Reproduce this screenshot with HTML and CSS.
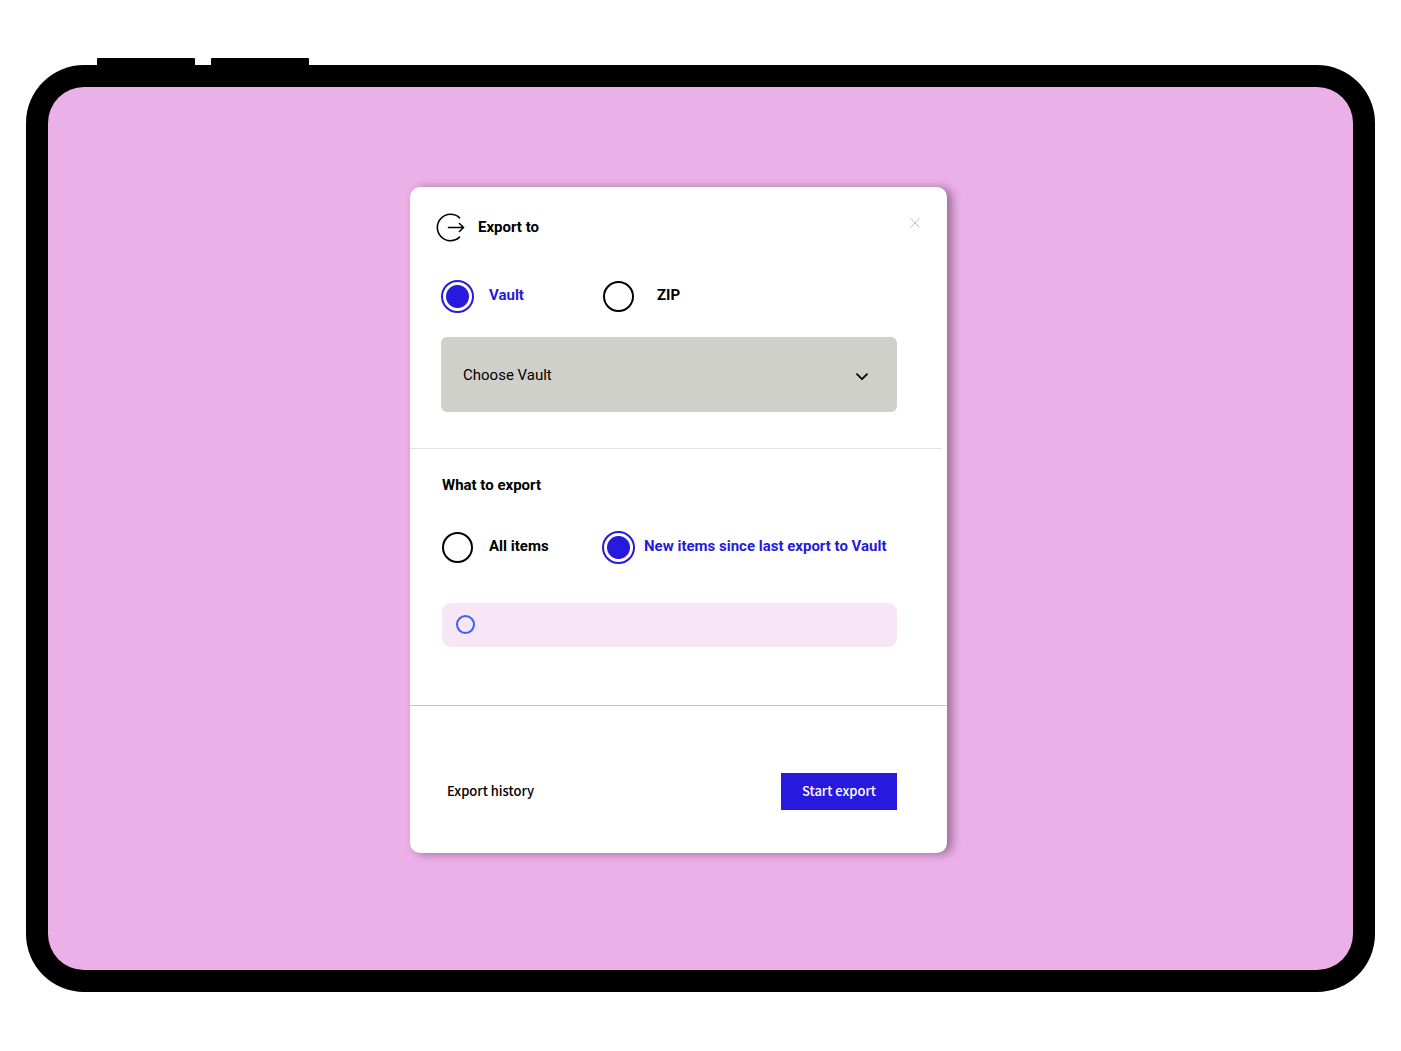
FILE: index.html
```html
<!DOCTYPE html>
<html lang="en">
<head>
<meta charset="utf-8">
<meta name="viewport" content="width=device-width, initial-scale=1">
<title>Export to</title>
<link rel="stylesheet" href="styles.css">
</head>
<body>
<div class="tablet">
  <span class="tablet-key tablet-key-up"></span>
  <span class="tablet-key tablet-key-down"></span>
  <main class="screen">
    <form class="dialog">
      <section class="panel">
        <header class="dialog-header">
          <svg class="export-icon" viewBox="0 0 29 29" aria-hidden="true">
            <path d="M23.5 4.800A13.200 13.200 0 1 0 23.500 24.200"/>
            <path d="M12.500 14.500H27.300M23.400 10.500L27.600 14.500L23.400 18.500"/>
          </svg>
          <h1 class="title">Export to</h1>
          <button class="close" type="button" aria-label="Close">
            <svg viewBox="0 0 12 12" aria-hidden="true"><path d="M1.500 1.500L10.500 10.500M10.500 1.500L1.500 10.500"/></svg>
          </button>
        </header>
        <div class="options">
          <label class="option"><input type="radio" name="target" checked><span>Vault</span></label>
          <label class="option option-wide"><input type="radio" name="target"><span>ZIP</span></label>
        </div>
        <div class="select-box">
          <select class="select" aria-label="Choose Vault"><option>Choose Vault</option></select>
          <svg class="chevron" viewBox="0 0 12 8" aria-hidden="true"><path d="M1 1.200L6 6.200L11 1.200"/></svg>
        </div>
      </section>
      <hr class="rule rule-light">
      <section class="panel panel-items">
        <h2 class="title">What to export</h2>
        <div class="options">
          <label class="option"><input type="radio" name="items"><span>All items</span></label>
          <label class="option option-tight"><input type="radio" name="items" checked><span>New items since last export to Vault</span></label>
        </div>
        <div class="notice" role="status"><span class="notice-ring"></span></div>
      </section>
      <hr class="rule">
      <footer class="dialog-footer">
        <a class="history" href="#history">Export history</a>
        <button class="start" type="submit">Start export</button>
      </footer>
    </form>
  </main>
</div>
</body>
</html>
```
FILE: styles.css
```css
* { box-sizing: border-box; }

body {
  margin: 0;
  padding: 65px 26px 59px;
  background: #fff;
  color: #000;
  font: 14px/20px Roboto, "Liberation Sans", sans-serif;
}

.tablet {
  position: relative;
  display: flex;
  min-height: calc(100vh - 124px);
  padding: 22px;
  border-radius: 58px;
  background: #000;
}

.tablet-key {
  position: absolute;
  top: -7px;
  width: 98px;
  height: 8px;
  border-radius: 1px 1px 0 0;
  background: #000;
}
.tablet-key-up { left: 71px; }
.tablet-key-down { left: 185px; }

.screen {
  flex: 1;
  display: flex;
  justify-content: center;
  align-items: center;
  padding: 0 44px 18px 0;
  border-radius: 36px;
  background: #ebb0e7;
}

.dialog {
  width: 100%;
  max-width: 537px;
  border-radius: 10px;
  background: #fff;
  box-shadow: 5px 1px 10px rgba(60, 20, 60, 0.45);
}

.panel { padding: 26px 50px 36px 31px; }
.panel-items { padding-bottom: 58px; }
.panel-items .title { margin-left: 1px; }

.dialog-header {
  display: flex;
  align-items: center;
  gap: 13px;
  margin: 0 -24px 38px -5px;
}

.export-icon {
  width: 29px;
  height: 29px;
  fill: none;
  stroke: #000;
  stroke-width: 1.6;
  stroke-linecap: round;
  stroke-linejoin: round;
}

.title {
  margin: 0;
  font-size: 15px;
  font-weight: 700;
  line-height: 20px;
}

.close {
  align-self: flex-start;
  display: flex;
  align-items: center;
  width: 12px;
  height: 20px;
  margin-left: auto;
  padding: 0;
  border: 0;
  background: none;
}
.close svg {
  width: 12px;
  height: 12px;
  fill: none;
  stroke: #b0b0b0;
  stroke-width: 0.8;
}

.options {
  display: grid;
  grid-template-columns: 161px 1fr;
  margin-bottom: 24px;
}
.panel-items .options { margin: 36px 0 39px; }

.option {
  display: flex;
  align-items: center;
  gap: 15px;
  font-size: 15px;
  font-weight: 700;
  white-space: nowrap;
}
.option span { padding-bottom: 2px; }
.option-wide { gap: 22px; }
.option-tight { gap: 9px; }
.option:has(:checked) { color: #271adc; }

.option input {
  flex: none;
  appearance: none;
  width: 31px;
  height: 31px;
  margin: 1px;
  border: 2px solid #000;
  border-radius: 50%;
}
.option input:checked {
  width: 33px;
  height: 33px;
  margin: 0;
  border-color: #271adc;
  background: radial-gradient(circle, #271adc 11px, #fff 12px);
}

.select-box { position: relative; }
.select {
  appearance: none;
  display: block;
  width: 100%;
  height: 75px;
  padding: 2px 22px 0;
  border: 0;
  border-radius: 6px;
  background: #d0d0cb;
  color: #000;
  font: 15px/20px Roboto, "Liberation Sans", sans-serif;
}
.chevron {
  position: absolute;
  top: 36px;
  right: 29px;
  width: 12px;
  height: 8px;
  fill: none;
  stroke: #000;
  stroke-width: 1.8;
  stroke-linecap: round;
  stroke-linejoin: round;
  pointer-events: none;
}

.rule {
  height: 1px;
  margin: 0;
  border: 0;
  background: #c8c8c8;
}
.rule-light {
  margin-right: 5px;
  background: #e3e3e3;
}

.notice {
  display: flex;
  align-items: center;
  height: 44px;
  margin-left: 1px;
  padding: 0 14px;
  border-radius: 9px;
  background: #f7e6f5;
}
.notice-ring {
  width: 19px;
  height: 19px;
  border: 2px solid #3a5dff;
  border-radius: 50%;
}

.dialog-footer {
  display: flex;
  align-items: center;
  justify-content: space-between;
  padding: 67px 50px 43px 37px;
}
.history,
.start {
  color: #000;
  font: 500 13px/20px "Noto Sans CJK SC", "Noto Sans", sans-serif;
  text-decoration: none;
}
.start {
  width: 116px;
  height: 37px;
  padding: 0;
  border: 0;
  background: #271adc;
  color: #fff;
}
```
